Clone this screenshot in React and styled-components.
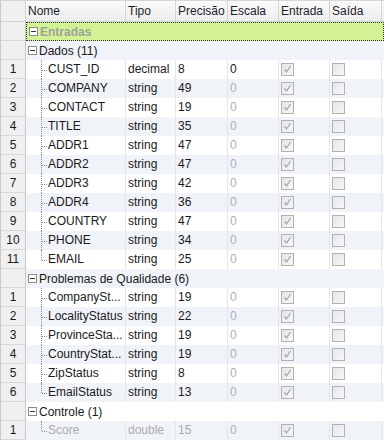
import React from 'react';
import styled, { createGlobalStyle } from 'styled-components';

const GlobalStyle = createGlobalStyle`
  html, body {
    margin: 0;
    padding: 0;
    background: #ffffff;
  }
  body {
    font-family: "Liberation Sans", Arial, sans-serif;
    font-size: 12px;
    color: #1a1a1a;
  }
`;

const COLS = '26px 100px 50px 52px 51px 51px 52px 2px';

const Grid = styled.div`
  width: 384px;
  height: 443px;
  overflow: hidden;
  display: flex;
  flex-direction: column;
`;

const HeaderRow = styled.div`
  display: grid;
  grid-template-columns: ${COLS};
  height: 22px;
  flex: none;
`;

const HeaderCell = styled.div`
  box-sizing: border-box;
  padding-left: 2px;
  line-height: 21px;
  color: #1e1e2a;
  background: linear-gradient(#fafafa, #ededed);
  border-top: 1px solid #d6d6d6;
  border-right: 1px solid #d4d4d4;
  border-bottom: 1px solid #d0d0d0;
  white-space: nowrap;
  overflow: hidden;
`;

const Corner = styled(HeaderCell)`
  background: #f0f0f0;
  border-left: 1px solid #c8c8c8;
`;

const Row = styled.div`
  display: grid;
  grid-template-columns: ${COLS};
  height: 19px;
  flex: none;
  background: ${(p) => (p.$alt ? '#f0f3f8' : '#ffffff')};
`;

const RowHead = styled.div`
  box-sizing: border-box;
  text-align: center;
  line-height: 18px;
  color: #1a1a1a;
  background: #f0f0f0;
  border-left: 1px solid #c8c8c8;
  border-right: 1px solid #c6c6c6;
  border-bottom: 1px solid #d8d8d8;
`;

const Cell = styled.div`
  box-sizing: border-box;
  padding-left: 2px;
  line-height: 19px;
  border-right: 1px solid #e4e6ea;
  white-space: nowrap;
  overflow: hidden;
  color: ${(p) => (p.$muted ? '#a9b0bd' : p.$off ? '#ababab' : '#1a1a1a')};
`;

const NameCell = styled(Cell)`
  position: relative;
  padding-left: 22px;

  &::before {
    content: '';
    position: absolute;
    left: 15px;
    top: 0;
    height: ${(p) => (p.$last ? '10px' : '19px')};
    border-left: 1px dotted #8c8c8c;
  }
  &::after {
    content: '';
    position: absolute;
    left: 16px;
    top: 10px;
    width: 5px;
    border-top: 1px dotted #8c8c8c;
  }
`;

const GroupBand = styled.div`
  grid-column: 2 / 9;
  display: flex;
  align-items: center;
  gap: 2px;
  padding-left: 2px;
  box-sizing: border-box;
  background: ${(p) => (p.$active ? '#d2f293' : 'transparent')};
  border: ${(p) => (p.$active ? '1px dotted #333' : 'none')};
  color: ${(p) => (p.$active ? '#9ea39a' : '#1a1a1a')};
  font-weight: ${(p) => (p.$active ? 'bold' : 'normal')};
  white-space: nowrap;
`;

const Toggle = styled.span`
  width: 9px;
  height: 9px;
  box-sizing: border-box;
  border: 1px solid #8a8a8a;
  background: #fff;
  position: relative;
  flex: none;

  &::after {
    content: '';
    position: absolute;
    left: 1px;
    top: 3px;
    width: 5px;
    height: 1px;
    background: #333;
  }
`;

const CheckCell = styled.div`
  box-sizing: border-box;
  border-right: 1px solid #e4e6ea;
  display: flex;
  align-items: center;
  padding-left: 2px;
`;

const Box = styled.span`
  width: 13px;
  height: 13px;
  box-sizing: border-box;
  border: 1px solid #b2b2b2;
  background: linear-gradient(135deg, #e6e6e6, #f7f7f7);
  display: flex;
  align-items: center;
  justify-content: center;
`;

const Check = ({ on }) => (
  <Box>
    {on && (
      <svg width="9" height="9" viewBox="0 0 9 9">
        <path d="M1.5 4.5 L3.5 7 L7.5 1" fill="none" stroke="#a8a8a8" strokeWidth="1.3" />
      </svg>
    )}
  </Box>
);

const groups = [
  {
    title: 'Dados (11)',
    rows: [
      ['CUST_ID', 'decimal', '8'],
      ['COMPANY', 'string', '49'],
      ['CONTACT', 'string', '19'],
      ['TITLE', 'string', '35'],
      ['ADDR1', 'string', '47'],
      ['ADDR2', 'string', '47'],
      ['ADDR3', 'string', '42'],
      ['ADDR4', 'string', '36'],
      ['COUNTRY', 'string', '47'],
      ['PHONE', 'string', '34'],
      ['EMAIL', 'string', '25'],
    ],
  },
  {
    title: 'Problemas de Qualidade (6)',
    rows: [
      ['CompanySt...', 'string', '19'],
      ['LocalityStatus', 'string', '22'],
      ['ProvinceSta...', 'string', '19'],
      ['CountryStat...', 'string', '19'],
      ['ZipStatus', 'string', '8'],
      ['EmailStatus', 'string', '13'],
    ],
  },
  {
    title: 'Controle (1)',
    off: true,
    rows: [['Score', 'double', '15']],
  },
];

const headers = ['Nome', 'Tipo', 'Precisão', 'Escala', 'Entrada', 'Saída', ''];

export default function App() {
  let idx = 0;
  const lines = [];
  groups.forEach((g, gi) => {
    idx += 1;
    lines.push(
      <Row key={`g${gi}`} $alt={idx % 2 === 1}>
        <RowHead />
        <GroupBand>
          <Toggle />
          {g.title}
        </GroupBand>
      </Row>
    );
    g.rows.forEach(([name, type, prec], ri) => {
      idx += 1;
      const first = gi === 0 && ri === 0;
      lines.push(
        <Row key={`r${gi}-${ri}`} $alt={idx % 2 === 1}>
          <RowHead>{ri + 1}</RowHead>
          <NameCell $last={ri === g.rows.length - 1} $off={g.off}>{name}</NameCell>
          <Cell $off={g.off}>{type}</Cell>
          <Cell $off={g.off}>{prec}</Cell>
          <Cell $muted={!first}>0</Cell>
          <CheckCell><Check on /></CheckCell>
          <CheckCell><Check /></CheckCell>
          <Cell />
        </Row>
      );
    });
  });

  return (
    <>
      <GlobalStyle />
      <Grid>
        <HeaderRow>
          <Corner />
          {headers.map((h, i) => (
            <HeaderCell key={i}>{h}</HeaderCell>
          ))}
        </HeaderRow>
        <Row>
          <RowHead />
          <GroupBand $active>
            <Toggle />
            Entradas
          </GroupBand>
        </Row>
        {lines}
      </Grid>
    </>
  );
}
